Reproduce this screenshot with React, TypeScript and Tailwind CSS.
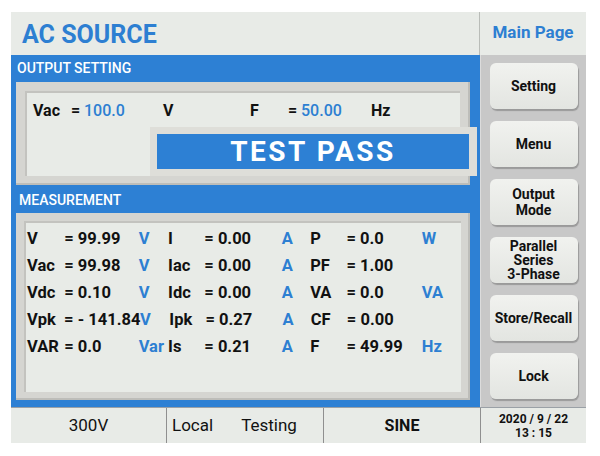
import React from "react";

const font = "font-['Roboto','Liberation_Sans',sans-serif]";

type Cell = { label: string; value: string; unit: string };

const rows: Cell[][] = [
  [
    { label: "V", value: "= 99.99", unit: "V" },
    { label: "I", value: "= 0.00", unit: "A" },
    { label: "P", value: "= 0.0", unit: "W" },
  ],
  [
    { label: "Vac", value: "= 99.98", unit: "V" },
    { label: "Iac", value: "= 0.00", unit: "A" },
    { label: "PF", value: "= 1.00", unit: "" },
  ],
  [
    { label: "Vdc", value: "= 0.10", unit: "V" },
    { label: "Idc", value: "= 0.00", unit: "A" },
    { label: "VA", value: "= 0.0", unit: "VA" },
  ],
  [
    { label: "Vpk", value: "= - 141.84", unit: "V" },
    { label: "Ipk", value: "= 0.27", unit: "A" },
    { label: "CF", value: "= 0.00", unit: "" },
  ],
  [
    { label: "VAR", value: "= 0.0", unit: "Var" },
    { label: "Is", value: "= 0.21", unit: "A" },
    { label: "F", value: "= 49.99", unit: "Hz" },
  ],
];

// widths of label / value / unit cells for each of the 3 groups
const widths = [
  ["w-[38px]", "w-[76px]", "w-[30px]"],
  ["w-[37px]", "w-[79px]", "w-[29px]"],
  ["w-[37px]", "w-[77px]", "w-[40px]"],
];

const buttons = [
  ["Setting"],
  ["Menu"],
  ["Output", "Mode"],
  ["Parallel", "Series", "3-Phase"],
  ["Store/Recall"],
  ["Lock"],
];

function SideButton({ lines }: { lines: string[] }) {
  return (
    <div className="flex h-[46px] w-[88px] flex-col items-center justify-center rounded-[6px] bg-gradient-to-b from-[#f1f2ef] to-[#e3e5e1] text-center text-[14px] font-bold text-[#111] shadow-[1px_2px_1px_#9a9a9a]">
      {lines.map((l) => (
        <span key={l} className={lines.length === 3 ? "leading-[14px]" : "leading-[16px]"}>
          {l}
        </span>
      ))}
    </div>
  );
}

export default function App() {
  return (
    <div className={`h-[456px] w-[600px] bg-white pl-[11px] pt-[12px] ${font}`}>
      <div className="flex h-[431px] w-[575px] flex-col">
        {/* header */}
        <div className="flex h-[43px] bg-[#e8ebe7]">
          <div className="flex w-[468px] items-center pl-[11px] pt-[2px] text-[25px] font-bold text-[#2d7fd2]">
            AC SOURCE
          </div>
          <div className="flex flex-1 items-center justify-center border-l border-[#b9bcb8] pb-[2px] text-[17px] font-bold text-[#2d7fd2]">
            Main Page
          </div>
        </div>

        {/* body */}
        <div className="flex h-[352px]">
          <div className="flex w-[467px] flex-col bg-[#2d80d4] pl-[5px]">
            <div className="flex h-[27px] items-center pl-[1px] text-[14px] font-medium text-white">
              OUTPUT SETTING
            </div>
            <div className="relative h-[103px] w-[454px] bg-[#d5d5d1] p-[9px] pr-[10px] shadow-[inset_-2px_-2px_0_#bdbdb9]">
              <div className="flex h-full w-full items-start border-l-2 border-t-2 border-[#c3c3bf] bg-[#e8ebe7] pl-[6px] pt-[6px] text-[16px]">
                <span className="w-[38px] font-bold text-[#111]">Vac</span>
                <span className="w-[13px] font-bold text-[#111]">=</span>
                <span className="w-[79px] font-medium text-[#2d7fd2]">100.0</span>
                <span className="w-[87px] font-bold text-[#111]">V</span>
                <span className="w-[38px] font-bold text-[#111]">F</span>
                <span className="w-[13px] font-bold text-[#111]">=</span>
                <span className="w-[70px] font-medium text-[#2d7fd2]">50.00</span>
                <span className="font-bold text-[#111]">Hz</span>
              </div>
              <div className="absolute left-[134px] top-[45px] h-[49px] w-[327px] bg-[#deded9] p-[7px] pr-[8px]">
                <div className="flex h-full w-full items-center justify-center bg-[#2d80d4] text-[28px] font-bold tracking-[2.5px] text-white">
                  TEST PASS
                </div>
              </div>
            </div>
            <div className="flex h-[28px] items-center pl-[3px] pt-[2px] text-[14px] font-medium text-white">
              MEASUREMENT
            </div>
            <div className="h-[187px] w-[454px] bg-[#d5d5d1] p-[8px] pr-[9px] shadow-[inset_-2px_-2px_0_#bdbdb9]">
              <div className="flex h-full w-full flex-col border-l-2 border-t-2 border-[#c3c3bf] bg-[#e8ebe7] pl-[1px] pt-[3px] text-[16.5px] font-bold">
                {rows.map((row, ri) => (
                  <div key={ri} className="flex h-[27px] items-center whitespace-nowrap">
                    {row.map((c, ci) => (
                      <React.Fragment key={ci}>
                        <span className={`${widths[ci][0]} text-[#111]`}>{c.label}</span>
                        <span className={`${widths[ci][1]} text-[#111]`}>{c.value}</span>
                        <span className={`${widths[ci][2]} text-[#2d7fd2]`}>{c.unit}</span>
                      </React.Fragment>
                    ))}
                  </div>
                ))}
              </div>
            </div>
          </div>
          <div className="w-[2px] bg-[#2d80d4]" />
          <div className="flex flex-1 flex-col items-center gap-[12px] border-l border-[#dcdcdc] bg-[#c8c8c8] pt-[8px]">
            {buttons.map((b) => (
              <SideButton key={b[0]} lines={b} />
            ))}
          </div>
        </div>

        {/* status bar */}
        <div className="flex h-[36px] border-t border-[#9aa0a6] bg-[#e8ebe7] text-[17px] text-[#111]">
          <div className="flex w-[155px] items-center justify-center">300V</div>
          <div className="flex w-[157px] items-center gap-[28px] border-l border-[#8f8f8f] pl-[5px]">
            <span>Local</span>
            <span>Testing</span>
          </div>
          <div className="flex w-[157px] items-center justify-center border-l border-[#8f8f8f] text-[16px] font-bold">
            SINE
          </div>
          <div className="flex flex-1 flex-col items-center justify-center border-l border-[#8f8f8f] text-[12px] font-bold leading-[14px]">
            <span>2020 / 9 / 22</span>
            <span>13 : 15</span>
          </div>
        </div>
      </div>
    </div>
  );
}
